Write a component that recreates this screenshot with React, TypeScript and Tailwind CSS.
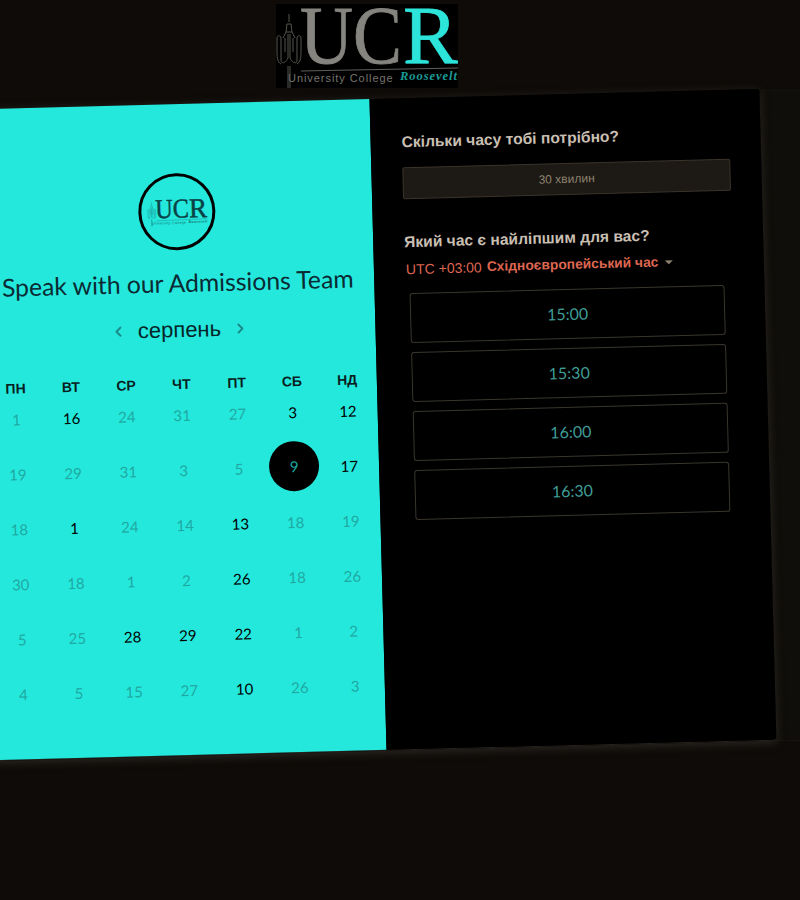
import React from "react";
import { ChevronLeft, ChevronRight } from "lucide-react";

function Logo({ small }: { small?: boolean }) {
  const main = small ? "#0a4146" : "#85847f";
  const accent = small ? "#0a4146" : "#2ce4da";
  const line = small ? "#15706f" : "#5f5f5a";
  return (
    <svg viewBox="0 0 182 84" className={small ? "w-[60px] h-[28px]" : "w-[182px] h-[84px]"}>
      {!small && <rect width="182" height="84" fill="#000" />}
      <g fontFamily="'Liberation Serif', serif" strokeWidth={small ? 1.5 : 0.8}>
        <text x="24" y="59" fontSize="83" fill={main} stroke={main} textLength="102" lengthAdjust="spacingAndGlyphs">UC</text>
        <text x="127" y="59" fontSize="83" fill={accent} stroke={accent} textLength="55" lengthAdjust="spacingAndGlyphs">R</text>
      </g>
      <path d="M25 67 L182 64" stroke={line} strokeWidth="1" fill="none" />
      <text x="12" y="78" fontFamily="'Liberation Sans', sans-serif" fontSize="11" letterSpacing="1.3" textLength="106" fill={small ? "#15706f" : "#76756e"}>University College</text>
      <text x="124" y="76" fontFamily="'Liberation Serif', serif" fontSize="12.5" fontStyle="italic" fontWeight="700" letterSpacing="1.1" textLength="58" fill={small ? "#15706f" : "#1a9c96"}>Roosevelt</text>
      <g stroke={small ? "#15706f" : "#55554f"} strokeWidth="1" fill="none">
        <path d="M12 84 V62 M14 84 V62 M5 60 C1 58 1 52 1 46 V34 C1 31 5 31 5 34 V56 C5 60 9 60 12 54 V30 M14 30 V54 C17 60 21 60 21 56 V34 C21 31 25 31 25 34 V46 C25 52 25 58 21 60" />
        <path d="M13 10 V18 M10 28 L11 20 H15 L16 28 M7 34 L10 28 H16 L19 34 M9 34 V48 M17 34 V48" />
      </g>
    </svg>
  );
}

const days: [string, boolean][][] = [
  [["1", false], ["16", true], ["24", false], ["31", false], ["27", false], ["3", true], ["12", true]],
  [["19", false], ["29", false], ["31", false], ["3", false], ["5", false], ["9", false], ["17", true]],
  [["18", false], ["1", true], ["24", false], ["14", false], ["13", true], ["18", false], ["19", false]],
  [["30", false], ["18", false], ["1", false], ["2", false], ["26", true], ["18", false], ["26", false]],
  [["5", false], ["25", false], ["28", true], ["29", true], ["22", true], ["1", false], ["2", false]],
  [["4", false], ["5", false], ["15", false], ["27", false], ["10", true], ["26", false], ["3", false]],
];
const weekdays = ["ПН", "ВТ", "СР", "ЧТ", "ПТ", "СБ", "НД"];
const slots = ["15:00", "15:30", "16:00", "16:30"];

export default function App() {
  return (
    <div className="w-[800px] h-[900px] overflow-hidden bg-[#0e0b08]">
      <div className="h-[90px] pt-1 pl-[276px]">
        <Logo />
      </div>
      <div className="relative h-[651px] pt-[9px]">
        <div className="absolute right-0 inset-y-0 w-[38px] bg-[#100e0a] border-y border-[#15130e]" />
        <div className="-ml-4 w-[784px] h-[652px] rotate-[-1.5deg] flex rounded-[3px] shadow-[0_2px_10px_rgba(70,66,60,0.55)] border-r border-b border-[#26231e]">
          <section className="w-[394px] shrink-0 bg-[#24e8dc] pt-[69px] flex flex-col items-center">
            <div className="ml-[3px] w-[77px] h-[77px] rounded-full border-[3px] border-black flex items-center justify-center">
              <Logo small />
            </div>
            <h1 className="ml-[1px] mt-[16px] text-[24.7px] leading-[34px] text-[#0b2a33] font-['Lato',sans-serif] whitespace-nowrap">Speak with our Admissions Team</h1>
            <div className="ml-[2px] mt-[18px] h-[24px] flex items-center gap-[11px] text-[#062528] font-['Liberation_Sans',sans-serif] text-[22px] leading-[24px]">
              <ChevronLeft size={16} strokeWidth={3} className="text-[#1b8a88]" />
              <span>серпень</span>
              <ChevronRight size={16} strokeWidth={3} className="text-[#1b8a88]" />
            </div>
            <div className="ml-[3px] mt-[36px] w-[387px] h-[12px] grid grid-cols-7 font-['Liberation_Sans',sans-serif] text-[14px] font-bold leading-[12px] text-[#0a1e22] text-center">
              {weekdays.map((d) => (
                <div key={d}>{d}</div>
              ))}
            </div>
            <div className="ml-[3px] -mt-[2px] w-[387px] grid grid-cols-7 font-['Lato',sans-serif] text-[15px] text-center">
              {days.flat().map(([d, on], i) => (
                <div key={i} className="h-[55px] flex items-center justify-center">
                  {d === "9" ? (
                    <span className="mb-[3px] w-[50px] h-[50px] rounded-full bg-black text-[#1fa9a2] flex items-center justify-center">{d}</span>
                  ) : (
                    <span className={on ? "text-black" : "text-[#1fa9a2]"}>{d}</span>
                  )}
                </div>
              ))}
            </div>
          </section>
          <section className="w-[390px] shrink-0 bg-black pt-[34px] pl-[31px] pr-[31px] rounded-r-[3px] font-['Liberation_Sans',sans-serif]">
            <h2 className="text-[15.6px] leading-[20px] font-bold text-[#c8bfb2]">Скільки часу тобі потрібно?</h2>
            <div className="mt-[15px] h-[32px] rounded-[2px] bg-[#1d1914] border border-[#3a342b] flex items-center justify-center text-[12px] text-[#8d8270]">30 хвилин</div>
            <h2 className="mt-[33px] text-[15.6px] leading-[20px] font-bold text-[#c8bfb2]">Який час є найліпшим для вас?</h2>
            <div className="mt-[7px] pl-[1px] h-[20px] flex items-center text-[14px] text-[#dd6650] whitespace-nowrap">
              <span>UTC +03:00</span>
              <span className="ml-[5px] font-bold text-[13.8px]">Східноєвропейський час</span>
              <span className="ml-[6px] w-0 h-0 border-x-[4px] border-x-transparent border-t-[4px] border-t-[#8d8270]" />
            </div>
            <div className="mt-[14px] ml-[4px] w-[315px] flex flex-col gap-[9px]">
              {slots.map((s) => (
                <div key={s} className="h-[50px] rounded-[3px] border border-[#3a362e] flex items-center justify-center font-['Lato',sans-serif] text-[16px] text-[#3f9d96]">
                  {s}
                </div>
              ))}
            </div>
          </section>
        </div>
      </div>
    </div>
  );
}
